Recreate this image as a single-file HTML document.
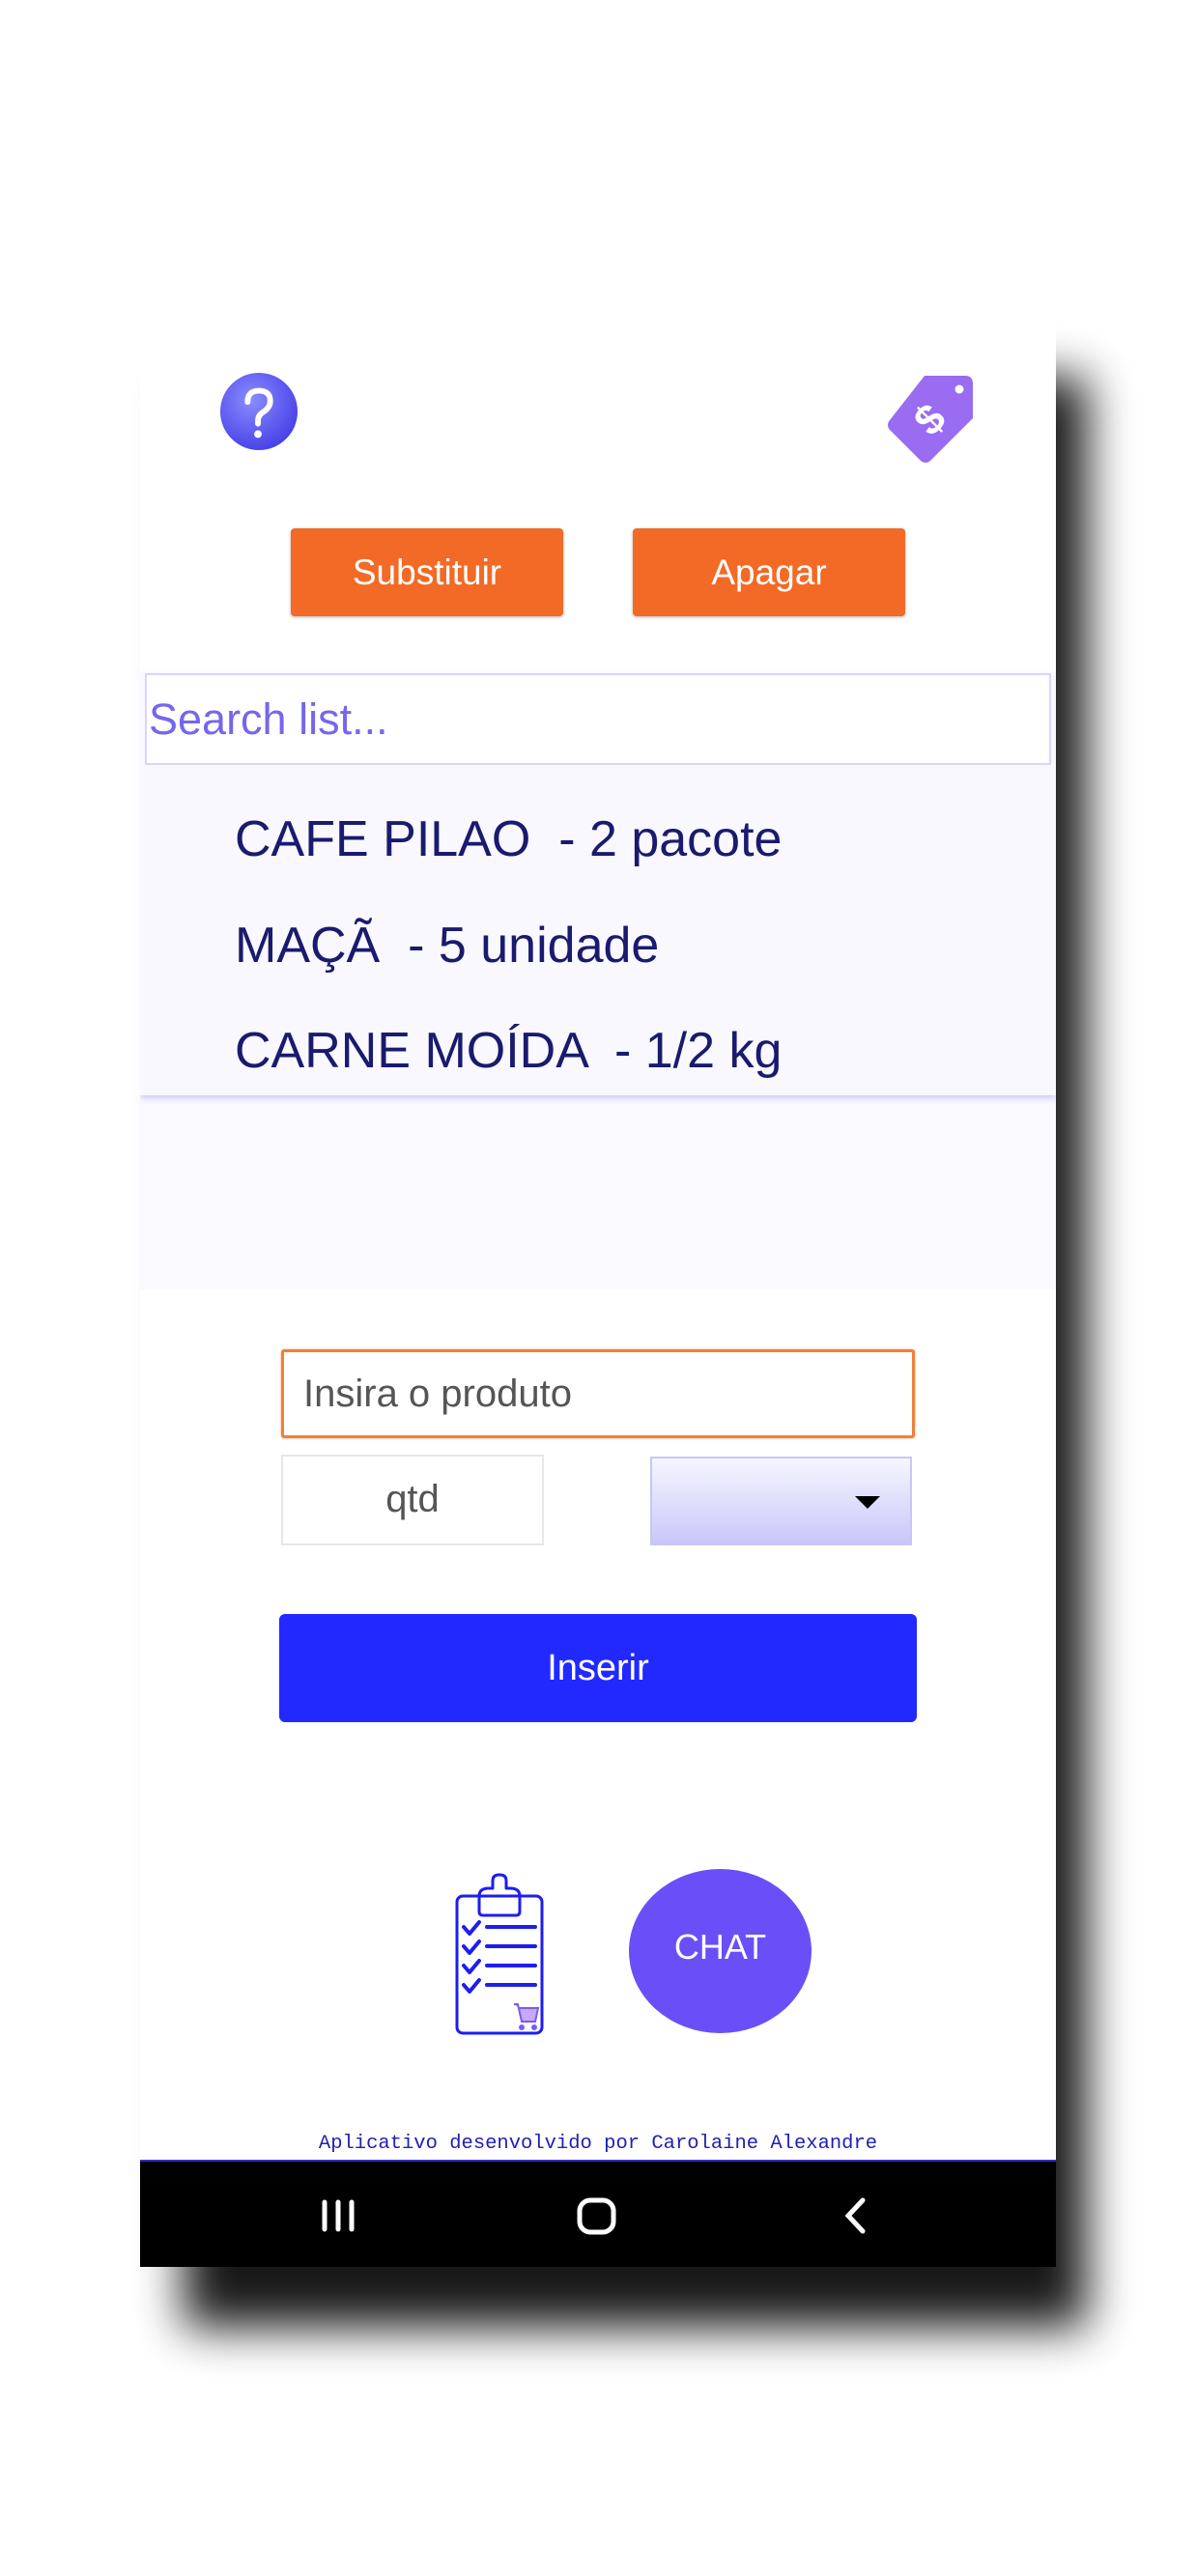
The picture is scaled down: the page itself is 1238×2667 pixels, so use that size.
<!DOCTYPE html>
<html><head><meta charset="utf-8"><style>
*{margin:0;padding:0;box-sizing:border-box}
body{width:1238px;height:2667px;background:#fff;position:relative;overflow:hidden;font-family:"Liberation Sans",Roboto,sans-serif}
.a{position:absolute}
.shadow{left:190px;top:390px;width:935px;height:2020px;background:#000;filter:blur(24px);opacity:.9}
.phone{left:145px;top:323px;width:948px;height:2024px;background:#fff;overflow:hidden}
.btn{background:#f26a26;color:#fff;font-size:37px;text-align:center;line-height:91px;border-radius:4px;box-shadow:0 1px 3px rgba(0,0,0,.3)}
.item{left:98px;font-size:52px;color:#1a1a6e}
</style></head><body>
<div class="a shadow"></div>
<div class="a phone">
  <svg class="a" style="left:82px;top:62px" width="82" height="82" viewBox="0 0 84 84">
    <defs><radialGradient id="g" cx="40%" cy="35%" r="65%"><stop offset="0" stop-color="#8a8cff"/><stop offset="1" stop-color="#4a44e8"/></radialGradient></defs>
    <circle cx="42" cy="42" r="41" fill="url(#g)"/>
    <path d="M30 32 Q30 20 42 20 Q54 20 54 31 Q54 38 46 43 Q41 46 41 52 L41 55" fill="none" stroke="#fff" stroke-width="6" stroke-linecap="round"/>
    <circle cx="41" cy="66" r="4" fill="#fff"/>
  </svg>
  <svg class="a" style="left:768px;top:60px" width="100" height="100" viewBox="0 0 100 100">
    <path d="M44 6 L86 6 Q94 6 94 14 L94 50 L50 94 Q45 98 40 94 L8 62 Q4 57 8 52 Z" fill="#9a6cf2"/>
    <circle cx="80" cy="20" r="4.5" fill="#fff"/>
    <text x="50" y="66" font-size="44" font-weight="bold" fill="#fff" text-anchor="middle" transform="rotate(-45 50 52)" font-family="Liberation Sans">$</text>
  </svg>
  <div class="a btn" style="left:156px;top:224px;width:282px;height:91px">Substituir</div>
  <div class="a btn" style="left:510px;top:224px;width:282px;height:91px">Apagar</div>
  <div class="a" style="left:0;top:469px;width:948px;height:543px;background:#fafafe"></div>
  <div class="a" style="left:0;top:374px;width:948px;height:437px;background:#f8f8fe;box-shadow:0 3px 6px rgba(120,110,255,.35)"></div>
  <div class="a" style="left:5px;top:374px;width:938px;height:95px;background:#fff;border:2px solid #d8d6fb;font-size:45px;color:#7466ee;line-height:92px;padding-left:2px">Search list...</div>
  <div class="a item" style="top:516px">CAFE PILAO &nbsp;- 2 pacote</div>
  <div class="a item" style="top:626px">MAÇÃ &nbsp;- 5 unidade</div>
  <div class="a item" style="top:735px">CARNE MOÍDA &nbsp;- 1/2 kg</div>
  <div class="a" style="left:146px;top:1074px;width:656px;height:92px;border:3px solid #f0803a;border-radius:3px;box-shadow:0 0 2px #f5a060;font-size:40px;color:#555;line-height:86px;padding-left:20px">Insira o produto</div>
  <div class="a" style="left:146px;top:1183px;width:272px;height:94px;border:2px solid #e6e6ec;font-size:40px;color:#555;line-height:88px;text-align:center">qtd</div>
  <div class="a" style="left:528px;top:1185px;width:271px;height:92px;border:2px solid #c8c6f6;background:linear-gradient(#f6f6ff,#c9c7fa)"></div>
  <div class="a" style="left:740px;top:1226px;width:0;height:0;border-left:13px solid transparent;border-right:13px solid transparent;border-top:13px solid #000"></div>
  <div class="a" style="left:144px;top:1348px;width:660px;height:112px;background:#2229ff;border-radius:6px;color:#fff;font-size:38px;text-align:center;line-height:112px">Inserir</div>
  <svg class="a" style="left:325px;top:1612px" width="94" height="172" viewBox="0 0 94 172">
    <g fill="none" stroke="#1d1df0" stroke-width="3" stroke-linecap="round" stroke-linejoin="round">
      <rect x="3" y="28" width="88" height="142" rx="6"/>
      <path d="M26 28 L26 44 Q26 48 30 48 L64 48 Q68 48 68 44 L68 28 Q68 20 58 20 L54 20 L54 12 Q54 6 47 6 Q40 6 40 12 L40 20 L36 20 Q26 20 26 28Z"/>
      <path d="M10 60 l6 7 l10-12 M10 80 l6 7 l10-12 M10 100 l6 7 l10-12 M10 120 l6 7 l10-12" stroke-width="4"/>
      <path d="M34 60 H84 M34 80 H84 M34 100 H84 M34 120 H84" stroke-width="4"/>
    </g>
    <path d="M62 140 l4 0 l4 18 h14 l3-14 h-20" fill="#c8a8f8" stroke="#7a5cf0" stroke-width="2"/>
    <circle cx="70" cy="164" r="3" fill="#7a5cf0"/><circle cx="83" cy="164" r="3" fill="#7a5cf0"/>
  </svg>
  <div class="a" style="left:506px;top:1612px;width:189px;height:170px;border-radius:50%;background:#6a4ff8;color:#fff;font-size:36px;text-align:center;line-height:162px">CHAT</div>
  <div class="a" style="left:0;top:1885px;width:948px;text-align:center;font-family:'Liberation Mono',monospace;font-size:20.5px;color:#2020b0">Aplicativo desenvolvido por Carolaine Alexandre</div>
  <div class="a" style="left:0;top:1913px;width:948px;height:111px;background:#000;border-top:2px solid #3030c0"></div>
  <svg class="a" style="left:0;top:1913px" width="948" height="111" viewBox="0 0 948 111">
    <g stroke="#fff" stroke-width="5" fill="none" stroke-linecap="round">
      <path d="M191 44 V72 M205 44 V72 M219 44 V72"/>
      <rect x="455" y="42" width="35" height="33" rx="11"/>
      <path d="M748 42 L733 58 L748 74"/>
    </g>
  </svg>
</div>
</body></html>
